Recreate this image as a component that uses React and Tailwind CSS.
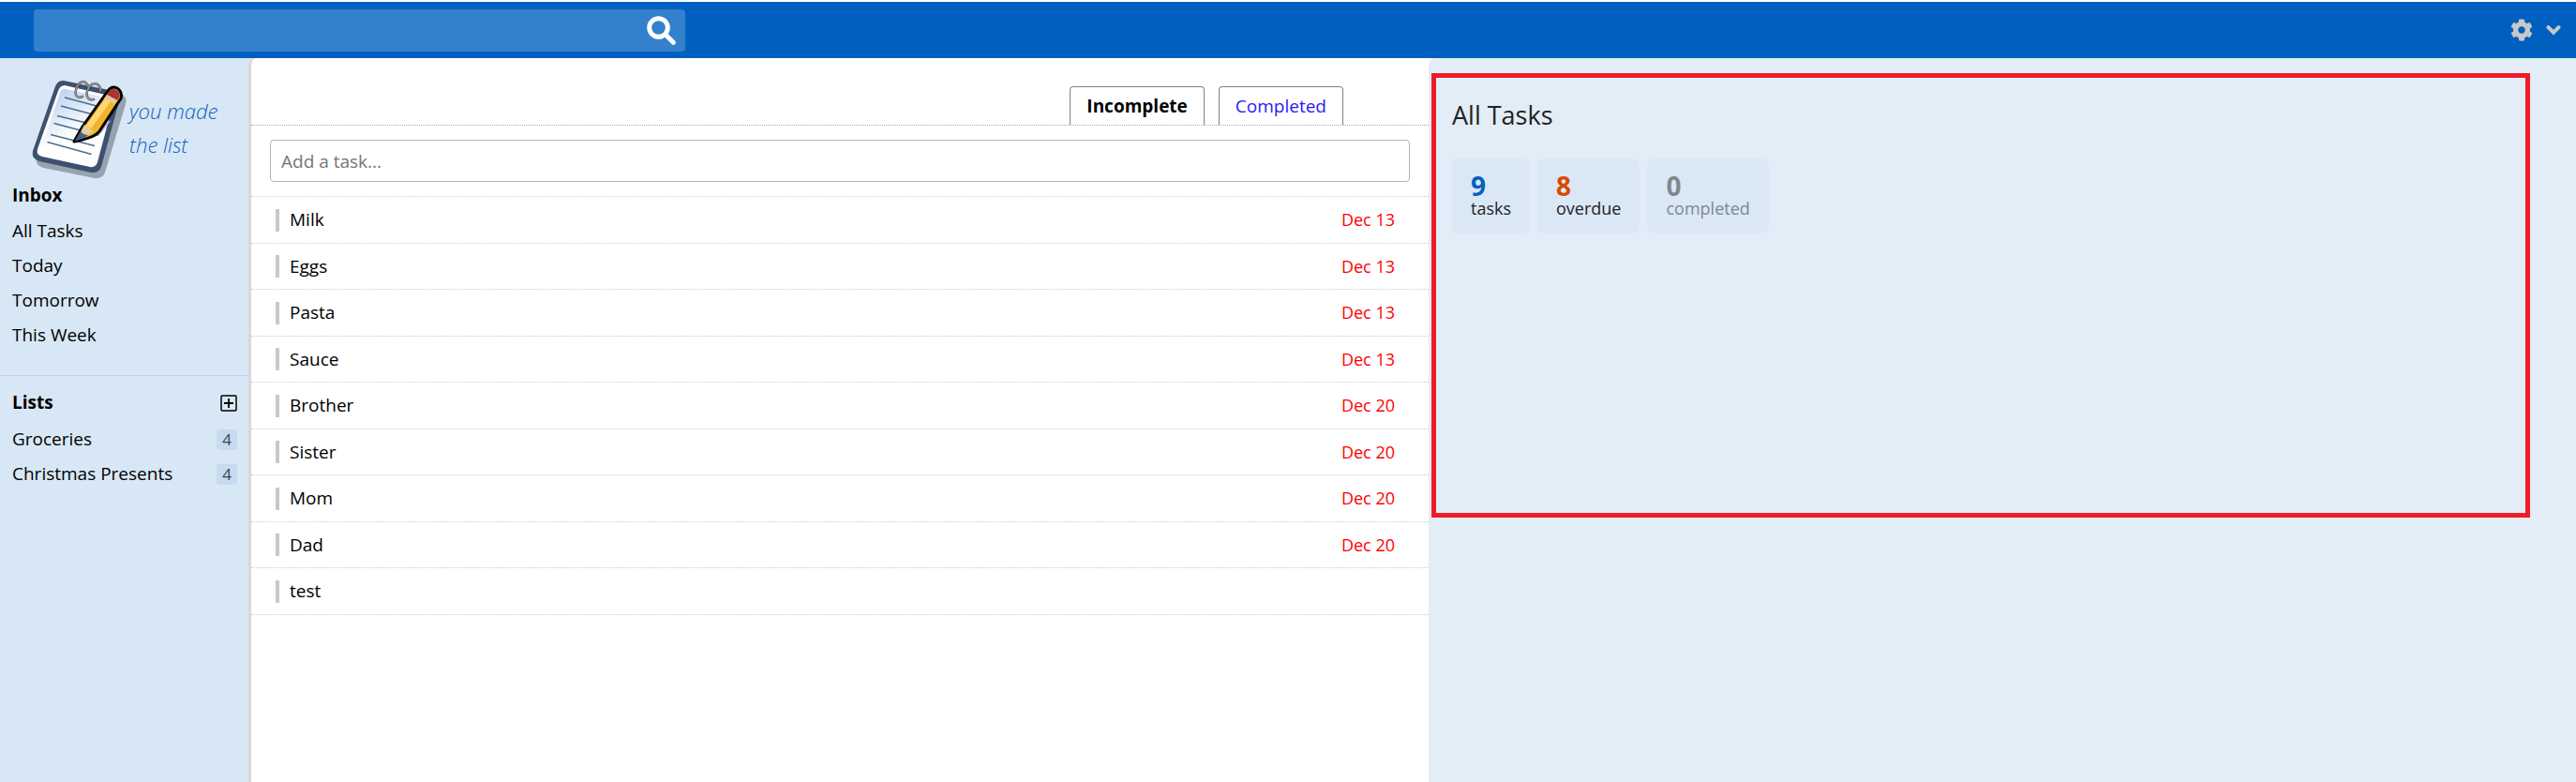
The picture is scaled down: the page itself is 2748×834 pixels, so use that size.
import React from "react";
import { FaCog } from "react-icons/fa";

const inbox = ["All Tasks", "Today", "Tomorrow", "This Week"];
const lists = [
  { name: "Groceries", count: 4 },
  { name: "Christmas Presents", count: 4 },
];
const tasks = [
  { name: "Milk", due: "Dec 13" },
  { name: "Eggs", due: "Dec 13" },
  { name: "Pasta", due: "Dec 13" },
  { name: "Sauce", due: "Dec 13" },
  { name: "Brother", due: "Dec 20" },
  { name: "Sister", due: "Dec 20" },
  { name: "Mom", due: "Dec 20" },
  { name: "Dad", due: "Dec 20" },
  { name: "test", due: "" },
];

function NotebookIcon() {
  return (
    <svg className="h-[112px] w-[110px] shrink-0" viewBox="30 80 110 112" aria-hidden="true">
      <defs>
        <linearGradient id="paper" x1="0.2" y1="0" x2="0.5" y2="0.6">
          <stop offset="0" stopColor="#b9cdf0" />
          <stop offset="1" stopColor="#ffffff" />
        </linearGradient>
      </defs>
      <path d="M70 92 L128 100 Q137 103 134 111 L112 184 Q109 191 101 190 L46 179 Q37 176 39 168 L62 97 Q65 91 70 92Z" fill="#97a3af" />
      <path d="M68 86 L121 97 Q130 100 127 108 L108 178 Q105 185 97 184 L42 172 Q33 169 35 161 L59 92 Q62 85 68 86Z" fill="#3c5170" />
      <path d="M69 91 L117 102 Q123 104 121 109 L104 173 Q102 179 96 178 L45 167 Q38 165 40 159 L62 97 Q64 91 69 91Z" fill="#fff" />
      <path d="M70 95 L113 104 Q119 106 117 111 L101 170 Q100 175 94 174 L48 164 Q42 163 44 157 L64 99 Q66 94 70 95Z" fill="url(#paper)" />
      <path d="M119 128 L106 144 L82 153 L90 145Z" fill="#b4bac4" />
      <path d="M69 104l34 9M65 113l34 9M61 123.500l33 8M57.500 131.500l34 9M54 143.500l47 12M50.500 151.500l47 13M100 143l5 1.500" stroke="#46708a" strokeWidth="1.300" fill="none" />
      <path d="M88 103 C81 106 79 100 82 93 C85 85 92 86 94 92 M100 106 C93 108 91 101 94 95 C97 87 105 88 107 94 L107 97" stroke="#555" strokeWidth="2.600" fill="none" strokeLinecap="round" />
      <path d="M88 103 C81 106 79 100 82 93 C85 85 92 86 94 92 M100 106 C93 108 91 101 94 95 C97 87 105 88 107 94 L107 97" stroke="#aaa69d" strokeWidth="1.200" fill="none" strokeLinecap="round" />
      <path d="M115 97 Q119 91 125 94 Q131 98 129 105 L106 140 Q101 147 79 151 L88 135Z" fill="#f2b32a" stroke="#000" strokeWidth="3" strokeLinejoin="round" />
      <path d="M113 104L92 134L97 137L119 107Z" fill="#ffd873" />
      <path d="M90 133l10 7l-9 6l-10 4z" fill="#e3cfa0" />
      <path d="M86 140q3 4 8 4q-4 4-14 6z" fill="#465f86" />
      <path d="M117 97 Q120 93 124 96 Q129 99 127 104 L125 107 L114 101Z" fill="#a8333a" />
      <path d="M114 101L125 107L122 111L111 105Z" fill="#e3c9a0" />
    </svg>
  );
}

function Stat({ value, label, valueClass, labelClass }) {
  return (
    <div className="flex h-20 flex-col rounded-lg bg-[#dae8f6] px-5 pt-[15px]">
      <span className={"text-[28px] leading-7 font-bold " + valueClass}>{value}</span>
      <span className={"text-[18px] leading-5 " + labelClass}>{label}</span>
    </div>
  );
}

export default function App() {
  return (
    <div className="flex min-h-screen flex-col bg-white font-['Open_Sans','Noto_Sans',sans-serif] text-[19px] text-black">
      <header className="mt-0.5 flex h-[60px] items-center justify-between bg-[#0060c0] pr-4 pl-9">
        <form role="search" className="flex h-[45px] w-[695px] items-center rounded bg-[#3380cc]">
          <input aria-label="Search tasks" type="text" className="h-full min-w-0 flex-1 bg-transparent px-3 text-white outline-none" />
          <button type="button" aria-label="Search" className="mr-2.5 text-white">
            <svg className="size-[31px]" viewBox="0 0 31 31" fill="none" stroke="currentColor" aria-hidden="true">
              <circle cx="12.500" cy="12.500" r="9.800" strokeWidth="5" />
              <path d="M20 20l8.300 8.300" strokeWidth="5" strokeLinecap="round" />
            </svg>
          </button>
        </form>
        <div className="flex items-center gap-3.5 text-[#c8c8c8]">
          <button type="button" aria-label="Settings"><FaCog className="size-6" /></button>
          <button type="button" aria-label="More">
            <svg className="size-4" viewBox="0 0 16 16" fill="none" stroke="currentColor" aria-hidden="true">
              <path d="M2.500 5.200L8 10.700l5.500-5.500" strokeWidth="4" strokeLinecap="round" />
            </svg>
          </button>
        </div>
      </header>

      <div className="flex flex-1 bg-[#d8e7f5]">
        <aside className="w-[265px] shrink-0">
          <div className="flex items-center pt-[18px] pl-[30px]">
            <NotebookIcon />
            <p className="-ml-0.5 text-[22px] leading-9 font-light whitespace-nowrap text-[#0f62c0] italic">
              you made
              <br />
              the list
            </p>
          </div>
          <nav aria-label="Inbox" className="px-[13px] pb-6">
            <h2 className="h-9 leading-8 font-bold">Inbox</h2>
            <ul>
              {inbox.map((n) => (
                <li key={n} className="h-[37px] leading-9"><a href="#">{n}</a></li>
              ))}
            </ul>
          </nav>
          <nav aria-label="Lists" className="border-t border-[#b8d6f5] pt-3 pr-3 pl-[13px]">
            <div className="flex h-[37px] items-center justify-between pb-1">
              <h2 className="font-bold">Lists</h2>
              <button type="button" aria-label="Add list">
                <svg className="size-[18px]" viewBox="0 0 18 18" aria-hidden="true">
                  <rect x="1" y="1" width="16" height="16" rx="1" fill="none" stroke="#000" strokeWidth="1.500" />
                  <path d="M9 4v10M4 9h10" stroke="#000" strokeWidth="1.800" />
                </svg>
              </button>
            </div>
            <ul>
              {lists.map((l) => (
                <li key={l.name} className="flex h-[37px] items-center justify-between">
                  <a href="#">{l.name}</a>
                  <span className="h-[22px] w-[22px] rounded-[3px] bg-[#c6dbf1] text-center text-[17px] leading-[22px] text-[#444]">{l.count}</span>
                </li>
              ))}
            </ul>
          </nav>
        </aside>

        <div className="grid flex-1 grid-cols-[1256fr_1224fr] rounded-tl-lg border-l-[3px] border-[#d8d8d8] bg-white">
          <main className="min-w-0">
            <div className="flex h-[72px] items-end justify-end gap-[15px] border-b border-dotted border-[#aaa] pr-[91px]">
              <button type="button" className="h-[41px] rounded-t border border-b-0 border-[#808080] px-[17px] font-bold">Incomplete</button>
              <button type="button" className="h-[41px] rounded-t border border-b-0 border-[#808080] px-[17px] text-[#2a1af5]">Completed</button>
            </div>
            <div className="border-b border-dotted border-[#ccc] px-5 py-[15px]">
              <input aria-label="Add a task" placeholder="Add a task..." className="block h-[45px] w-full rounded border border-[#b2b2b2] px-[11px] outline-none placeholder:text-[#757575]" />
            </div>
            <ul>
              {tasks.map((t) => (
                <li key={t.name} className="flex items-center border-b border-dotted border-[#ccc] pr-9 pl-[26px] odd:h-[50px] even:h-[49px]">
                  <span className="h-6 w-1 bg-[#c8c8c8]" />
                  <span className="ml-[11px] flex-1">{t.name}</span>
                  <span className="text-[18px] text-[#f00]">{t.due}</span>
                </li>
              ))}
            </ul>
          </main>

          <section aria-label="Summary" className="min-w-0 rounded-tl-lg bg-[#e3edf7] pt-4 pr-[49px] pl-[3px]">
            <div className="h-[474px] border-[5px] border-[#ee1c25] px-[17px] pt-[22px]">
              <h1 className="text-[27px] leading-9 text-[#222]">All Tasks</h1>
              <div className="mt-7 flex gap-2">
                <Stat value="9" label="tasks" valueClass="text-[#0060c0]" labelClass="text-[#222]" />
                <Stat value="8" label="overdue" valueClass="text-[#d84800]" labelClass="text-[#222]" />
                <Stat value="0" label="completed" valueClass="text-[#80878e]" labelClass="text-[#80878e]" />
              </div>
            </div>
          </section>
        </div>
      </div>
    </div>
  );
}
